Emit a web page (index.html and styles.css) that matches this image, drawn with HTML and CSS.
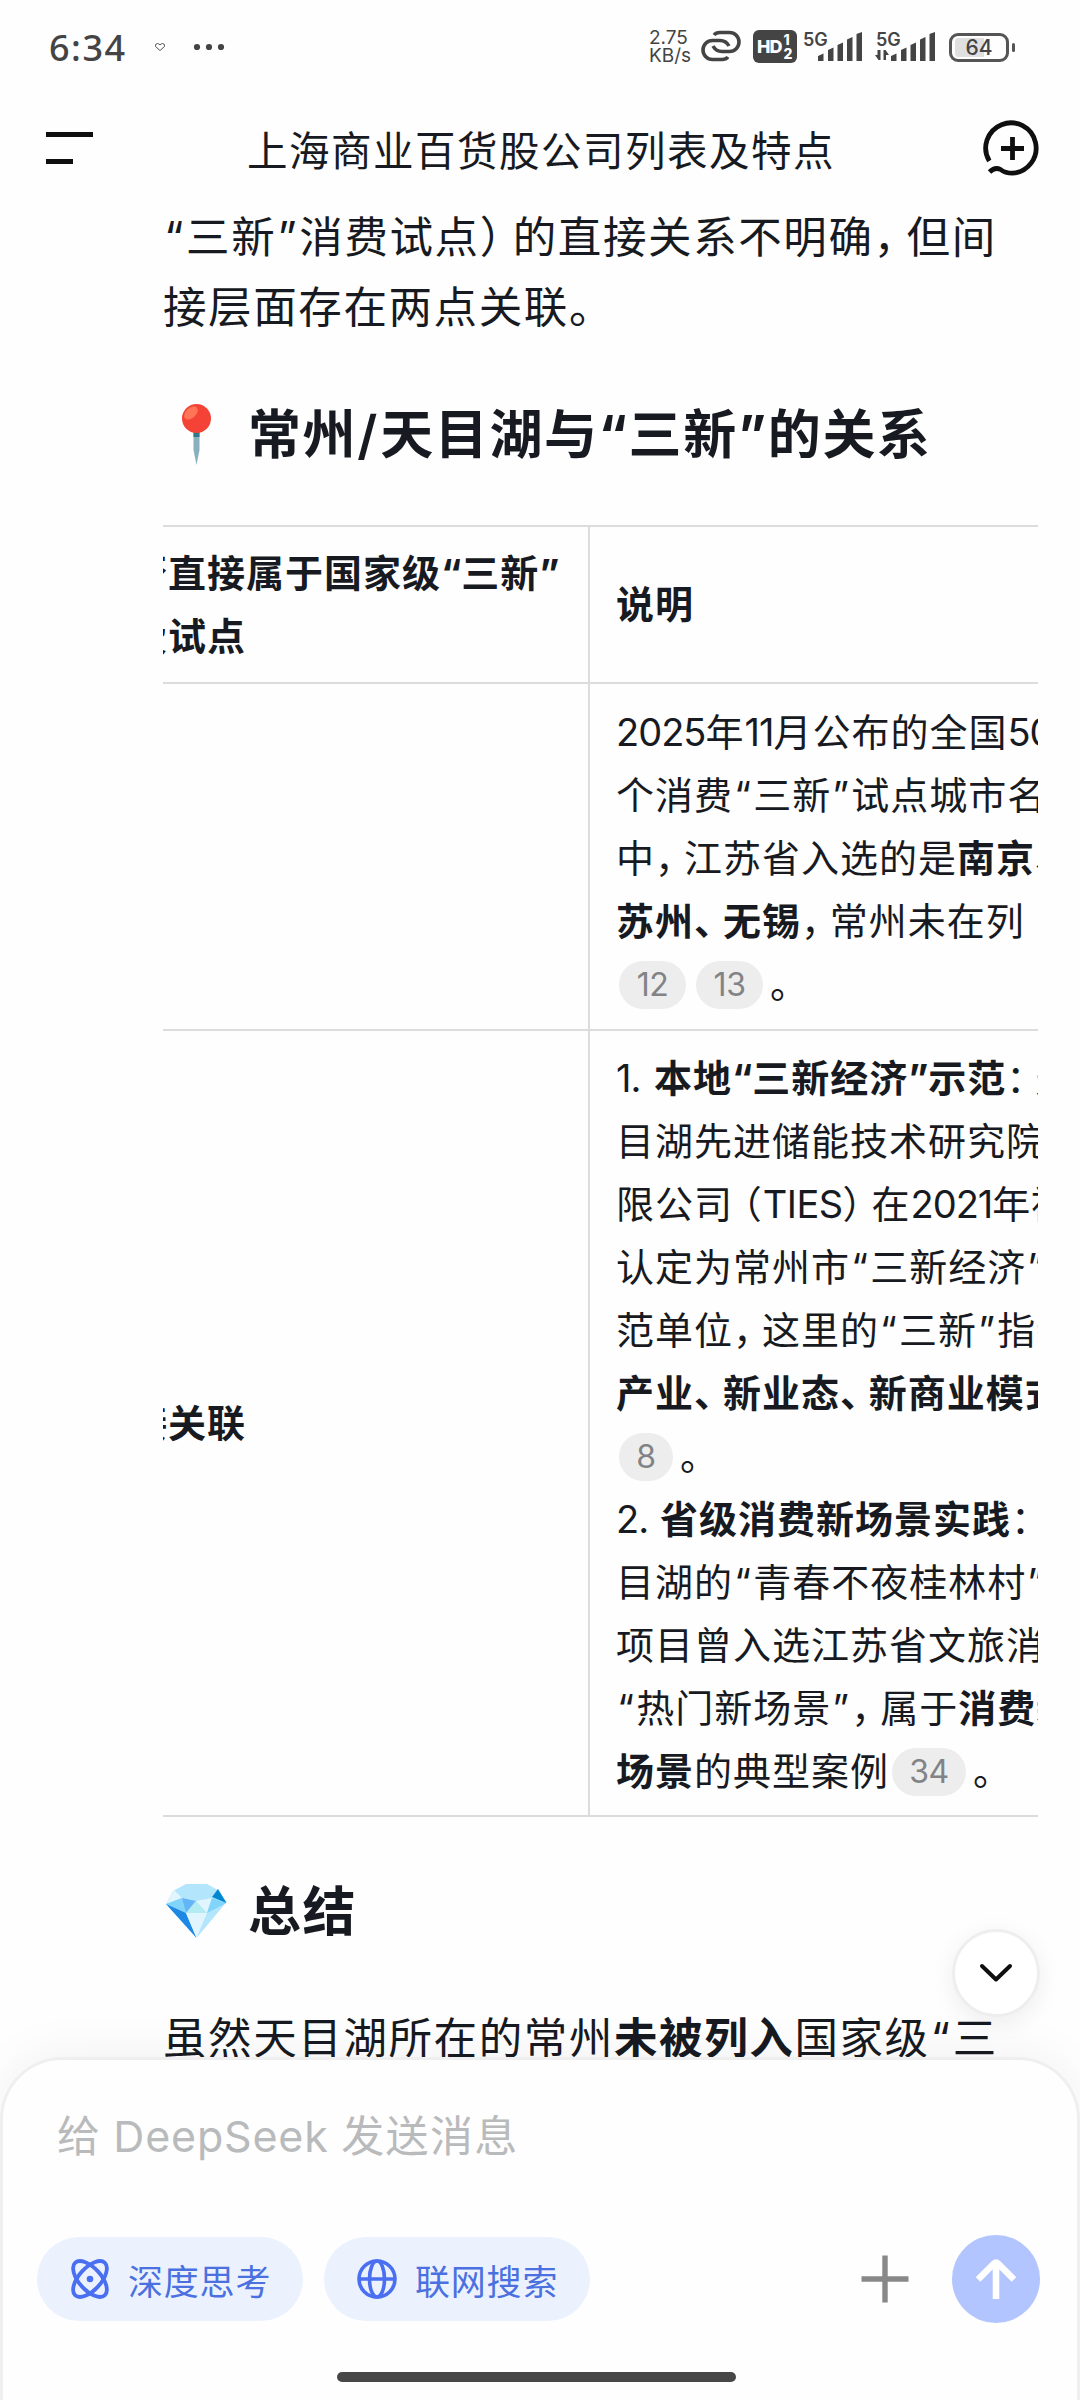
FILE: index.html
```html
<!DOCTYPE html>
<html lang="zh-CN">
<head>
  <meta charset="utf-8">
  <title>上海商业百货股公司列表及特点</title>
  <link rel="stylesheet" href="styles.css">
</head>

<body>

<!-- status bar -->
<div class="status">
  <span class="clock">6:34</span>
  <svg class="heart" width="12" height="10" viewBox="0 0 12 10"><path d="M6 8.5L1.5 4.5Q1 1.5 3.5 1.5Q5 1.5 6 3Q7 1.5 8.5 1.5Q11 1.5 10.5 4.5Z" fill="none" stroke="#555" stroke-width="1"/></svg>
  <svg class="dots" width="32" height="8" viewBox="0 0 32 8"><circle cx="4" cy="4" r="3.1"/><circle cx="16" cy="4" r="3.1"/><circle cx="28" cy="4" r="3.1"/></svg>
  <div class="speed">2.75<br>KB/s</div>
  <svg class="link" width="40" height="32" viewBox="0 0 40 32"><g fill="none" stroke="#444" stroke-width="3.600"><path d="M27 27Q25 29.500 21 29.500H11.500A9.500 9.500 0 0 1 11.500 10.500H19Q25 10.500 28 16"/><path d="M13 5Q15 2.500 19 2.500H28.500A9.500 9.500 0 0 1 28.500 21.500H21Q15 21.500 12 16"/></g></svg>
  <div class="hd">HD<span class="sims"><span>1</span><span>2</span></span></div>
  <div class="signal">
    <span class="gen">5G</span>
    <svg width="45" height="30" viewBox="0 0 45 30"><path d="M0 29V24L5.500 21.500V29ZM10 29V18L15.500 15.500V29ZM19.500 29V13L25 10.500V29ZM29 29V7.500L34.500 5V29ZM38.500 29V2L44 0V29Z" fill="#444"/></svg>
  </div>
  <div class="signal second">
    <span class="gen">5G</span>
    <svg class="updown" width="14" height="12" viewBox="0 0 14 12"><path d="M3.500 11L0 6H2.500V1H5.500V11ZM8.500 1L8.500 11H11V6H14L10.500 1Z" fill="#444"/></svg>
    <svg width="45" height="30" viewBox="0 0 45 30"><path d="M0 29V24L5.500 21.500V29ZM10 29V18L15.500 15.500V29ZM19.500 29V13L25 10.500V29ZM29 29V7.500L34.500 5V29ZM38.500 29V2L44 0V29Z" fill="#444"/></svg>
  </div>
  <div class="battery">64</div>
  <span class="nub"></span>
</div>

<!-- title bar -->
<div class="topbar">
  <div class="menu"><span></span><span></span></div>
  <div class="title">上海商业百货股公司列表及特点</div>
  <svg class="newchat" width="58" height="58" viewBox="0 0 58 58"><g fill="none" stroke="#0f0f10" stroke-width="4.800"><path d="M6.300 42A25.200 25.200 0 1 1 29.500 54.200Q22 54.200 17.500 50.500Q12 47.500 6.500 53"/><path d="M29.500 18V41M18 29.500H41"/></g></svg>
</div>

<!-- conversation -->
<div class="chat">
  <p><i class="q">“</i>三新<i class="q">”</i>消费试点<i class="c">）</i>的直接关系不明确<i class="c">，</i>但间<br>接层面存在两点关联。</p>

  <h2>
    <svg width="64" height="64" viewBox="0 0 64 64"><path d="M29.500 29H35.500V48L32.500 63L29.500 48Z" fill="#8ab0bd"/><path d="M29.500 28H35.500V35H29.500Z" fill="#2e7889"/><circle cx="32.500" cy="16.500" r="14.500" fill="#f44336"/><ellipse cx="27" cy="11" rx="8" ry="5" transform="rotate(-42 27 11)" fill="#ff7555"/></svg>
    <span>常州<i class="s">/</i>天目湖与<i class="q">“</i>三新<i class="q">”</i>的关系</span>
  </h2>

  <div class="scroller">
    <table>
      <tr class="r1">
        <th>是否直接属于国家级<i class="q">“</i>三新<i class="q">”</i><br>消费试点</th>
        <th>说明</th>
      </tr>
      <tr class="r2">
        <td></td>
        <td><b class="n">2025</b>年<b class="n">11</b>月公布的全国<b class="n">50</b><br>个消费<i class="q">“</i>三新<i class="q">”</i>试点城市名单<br>中<i class="c">，</i>江苏省入选的是<strong>南京<i class="c">、</i></strong><br><strong>苏州<i class="c">、</i>无锡</strong><i class="c">，</i>常州未在列<br><span class="ref">12</span><span class="ref">13</span>。</td>
      </tr>
      <tr class="r3">
        <th>间接关联</th>
        <td><b class="no">1.</b><strong>本地<i class="q">“</i>三新经济<i class="q">”</i>示范</strong><i class="c">：</i>天<br>目湖先进储能技术研究院有<br>限公司<i class="c open">（</i><b class="l">TIES</b><i class="c">）</i>在<b class="n">2021</b>年被<br>认定为常州市<i class="q">“</i>三新经济<i class="q">”</i>示<br>范单位<i class="c">，</i>这里的<i class="q">“</i>三新<i class="q">”</i>指新<br><strong>产业<i class="c">、</i>新业态<i class="c">、</i>新商业模式</strong><br><span class="ref one">8</span>。<br><b class="no two">2.</b><strong>省级消费新场景实践</strong><i class="c">：</i>天<br>目湖的<i class="q">“</i>青春不夜桂林村<i class="q">”</i><br>项目曾入选江苏省文旅消费<br><i class="q">“</i>热门新场景<i class="q">”</i><i class="c">，</i>属于<strong>消费新</strong><br><strong>场景</strong>的典型案例<span class="ref wide">34</span>。</td>
      </tr>
    </table>
  </div>

  <h2 class="sum">
    <svg width="64" height="64" viewBox="0 0 64 64"><path d="M22 5H43L54 11L62.500 23L32.500 59L2 25L9 12Z" fill="#b3e5fc"/><path d="M2 25L18 19L10 11Z" fill="#e1f5fe"/><path d="M2 25L18 19L22 34Z" fill="#81d4fa"/><path d="M18 19L32 22L22 34Z" fill="#64b5f6"/><path d="M32 22L43 34H22Z" fill="#b2ebf2"/><path d="M32 22L48 19L43 34Z" fill="#e1f5fe"/><path d="M48 19L62.500 24L43 34Z" fill="#81d4fa"/><path d="M54 10L62.500 24L48 18Z" fill="#0288d1"/><path d="M2 25L22 34L32.500 59Z" fill="#1e88e5"/><path d="M22 34H43L32.500 59Z" fill="#e1f5fe"/></svg>
    <span>总结</span>
  </h2>

  <p>虽然天目湖所在的常州<strong>未被列入</strong>国家级<i class="q">“</i>三</p>

  <div class="todown">
    <svg width="36" height="22" viewBox="0 0 36 22"><path d="M4 4L18 17.500L32 4" fill="none" stroke="#0f0f10" stroke-width="4" stroke-linecap="round" stroke-linejoin="round"/></svg>
  </div>
</div>

<!-- input panel -->
<div class="composer">
  <div class="placeholder">给<b>DeepSeek</b>发送消息</div>
  <div class="tools">
    <div class="pill">
      <svg width="42" height="42" viewBox="0 0 42 42"><g fill="none" stroke="#4a6ff0" stroke-width="3.800"><ellipse cx="21" cy="21" rx="22" ry="11" transform="rotate(48 21 21)"/><ellipse cx="21" cy="21" rx="22" ry="11" transform="rotate(-48 21 21)"/></g><circle cx="21" cy="21" r="3.300" fill="#4a6ff0"/></svg>
      深度思考
    </div>
    <div class="pill">
      <svg width="42" height="42" viewBox="0 0 42 42"><g fill="none" stroke="#4a6ff0" stroke-width="3.600"><circle cx="21" cy="21" r="18"/><ellipse cx="21" cy="21" rx="7.500" ry="18"/><path d="M3 21H39"/></g></svg>
      联网搜索
    </div>
    <svg class="plus" width="48" height="48" viewBox="0 0 48 48"><path d="M24 0.500V47.500M0.500 24H47.500" stroke="#888" stroke-width="5.400"/></svg>
    <div class="send">
      <svg width="44" height="44" viewBox="0 0 44 44"><path d="M22 42V6M4 22.500L20 6.500Q22 4.500 24 6.500L40 22.500" fill="none" stroke="#fff" stroke-width="6.600"/></svg>
    </div>
  </div>
  <div class="home"></div>
</div>

</body>
</html>
```
FILE: styles.css
```css
body {
  margin: 0;
  width: 1080px;
  height: 2400px;
  overflow: hidden;
  display: flex;
  flex-direction: column;
  background: #fefefe;
  color: #181a21;
  font-family: Inter, "Noto Sans CJK SC", sans-serif;
}
svg {
  display: block;
  flex: none;
}

/* status bar */
.status {
  height: 94px;
  flex: none;
  display: flex;
  align-items: center;
  box-sizing: border-box;
  padding-left: 49px;
  color: #444;
  fill: #444;
}
.clock {
  width: 105px;
  font-family: "Noto Sans", sans-serif;
  font-size: 36px;
  font-weight: 500;
  letter-spacing: 1.500px;
}
.dots {
  margin-left: 27px;
}
.speed {
  width: 52px;
  margin-left: 424px;
  font-size: 19px;
  line-height: 18px;
}
.link {
  margin-top: -2px;
}
.hd {
  width: 44px;
  height: 33px;
  margin: -1px 7px 0 12px;
  box-sizing: border-box;
  padding-left: 4px;
  border-radius: 6px;
  background: #444;
  color: #fff;
  font-size: 18px;
  font-weight: 800;
  letter-spacing: -1px;
  display: flex;
  align-items: center;
}
.sims {
  display: flex;
  flex-direction: column;
  font-size: 14px;
  line-height: 14px;
  margin-left: 2px;
}
.signal {
  position: relative;
  width: 60px;
  height: 30px;
  display: flex;
  justify-content: flex-end;
  margin-left: -1px;
}
.signal.second {
  margin-left: 13px;
}
.gen {
  position: absolute;
  left: 0;
  top: -1px;
  font-size: 18px;
  line-height: 17px;
  font-weight: 600;
}
.updown {
  position: absolute;
  left: -1px;
  top: 17px;
}
.battery {
  width: 60px;
  height: 29px;
  margin-left: 13px;
  box-sizing: border-box;
  border: 3px solid #555;
  border-radius: 9px;
  background: linear-gradient(90deg, #e0e0e0 60%, #fefefe 60%) content-box;
  padding: 2px 3px;
  font-size: 21px;
  line-height: 20px;
  font-weight: 500;
  text-align: center;
}
.nub {
  width: 3px;
  height: 9px;
  margin-left: 3px;
  border-radius: 2px;
  background: #555;
}

/* title bar */
.topbar {
  height: 108px;
  flex: none;
  display: flex;
  align-items: center;
  padding: 0 39px 0 46px;
}
.menu span {
  display: block;
  width: 47px;
  height: 5px;
  background: #0f0f10;
}
.menu span + span {
  width: 27px;
  margin-top: 22px;
}
.title {
  flex: 1;
  text-align: center;
  font-size: 40.500px;
  letter-spacing: 1.500px;
  padding-left: 6px;
}

/* conversation */
.chat {
  position: relative;
  flex: 1;
  min-height: 0;
  overflow: hidden;
  white-space: nowrap;
}
p {
  margin: 0;
  padding-left: 163px;
  font-size: 43.500px;
  line-height: 70px;
  letter-spacing: 1.600px;
}
i {
  display: inline-block;
  font-style: normal;
}
.q {
  width: 0.53em;
  text-align: center;
}
.c {
  width: 0.76em;
}
.c.open {
  display: inline-flex;
  width: 0.78em;
  justify-content: flex-end;
}
h2 {
  margin: 60px 0 59px;
  height: 64px;
  padding-left: 164px;
  display: flex;
  align-items: center;
  gap: 20px;
  font-size: 53px;
  line-height: 64px;
  letter-spacing: 1.600px;
}
h2 span {
  padding-top: 2px;
}
h2 .q {
  width: 30px;
}
.s {
  width: 23px;
  font-weight: 600;
}
.scroller {
  margin: 0 42px 0 163px;
  overflow: hidden;
}
table {
  width: 1100px;
  margin-left: -99px;
  table-layout: fixed;
  border-collapse: separate;
  border-spacing: 0;
  border-bottom: 2px solid #dcdcdc;
  font-size: 38px;
  line-height: 63px;
  letter-spacing: 1px;
}
th, td {
  box-sizing: border-box;
  padding: 0 26px;
  border-top: 2px solid #dcdcdc;
  text-align: left;
}
td {
  padding-top: 3px;
}
th:first-child, td:first-child {
  width: 526px;
  border-right: 2px solid #dcdcdc;
}
.r1 {
  height: 157px;
}
.r2 {
  height: 347px;
}
.r3 {
  height: 786px;
}
.n, .l, .no {
  font-weight: 400;
  letter-spacing: -1px;
}
.l {
  letter-spacing: -0.500px;
}
.no {
  display: inline-block;
  width: 38px;
}
.no.two {
  width: 44px;
}
.ref {
  display: inline-block;
  box-sizing: border-box;
  width: 67px;
  height: 48px;
  margin: 0 7px 0 3px;
  border-radius: 24px;
  background: #ededed;
  color: #828387;
  font-size: 32px;
  line-height: 48px;
  letter-spacing: -0.500px;
  text-align: center;
  vertical-align: 2px;
}
.ref.one {
  width: 54px;
}
.ref.wide {
  width: 74px;
}
h2.sum {
  margin: 62px 0 60px;
}
.todown {
  position: absolute;
  right: 40px;
  bottom: 40px;
  width: 88px;
  height: 88px;
  box-sizing: border-box;
  border: 3px solid #eee;
  border-radius: 50%;
  background: #fff;
  box-shadow: 0 6px 24px rgba(0, 0, 0, 0.07);
  display: flex;
  align-items: center;
  justify-content: center;
}

/* input panel */
.composer {
  position: relative;
  height: 343px;
  flex: none;
  box-sizing: border-box;
  border: 3px solid #efefef;
  border-bottom: none;
  border-radius: 62px 62px 0 0;
  background: #fefefe;
  box-shadow: 0 -4px 50px rgba(0, 0, 0, 0.05);
  padding: 46px 37px 0 34px;
}
.placeholder {
  height: 60px;
  padding-left: 20px;
  font-size: 43px;
  line-height: 60px;
  letter-spacing: 1.300px;
  color: #b9babc;
}
.placeholder b {
  display: inline-block;
  width: 214px;
  margin: 0 14px 0 12px;
  font-weight: 400;
  letter-spacing: 0.800px;
}
.tools {
  height: 88px;
  margin-top: 69px;
  display: flex;
  align-items: center;
}
.pill {
  width: 266px;
  height: 84px;
  margin-right: 21px;
  box-sizing: border-box;
  padding-left: 32px;
  border-radius: 42px;
  background: #ebf2fe;
  color: #4b70df;
  display: flex;
  align-items: center;
  gap: 17px;
  font-size: 35px;
  letter-spacing: 0.800px;
}
.plus {
  margin: 0 43px 0 auto;
}
.send {
  width: 88px;
  height: 88px;
  border-radius: 50%;
  background: #b2c5ff;
  display: flex;
  align-items: center;
  justify-content: center;
}
.home {
  width: 399px;
  height: 10px;
  margin: 49px 0 0 300px;
  border-radius: 5px;
  background: #474747;
}
```
